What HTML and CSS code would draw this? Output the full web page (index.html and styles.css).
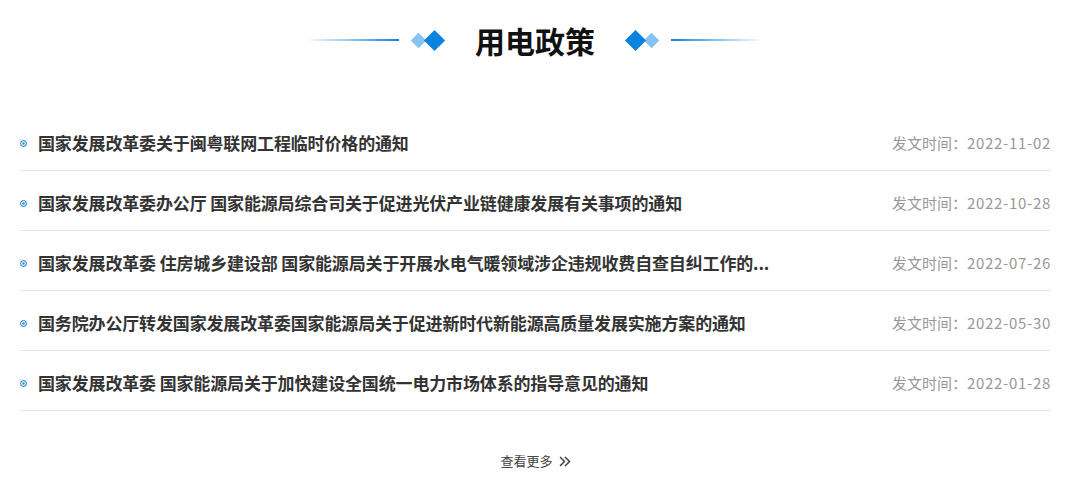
FILE: index.html
```html
<!DOCTYPE html>
<html lang="zh-CN">
<head>
<meta charset="utf-8">
<title>用电政策</title>
<link rel="stylesheet" href="styles.css">
</head>
<body>
<div class="page">
  <header class="head">
    <span class="line line-l"></span>
    <span class="dia-group dia-group-l">
      <span class="dia dia-light"></span>
      <span class="dia dia-dark"></span>
    </span>
    <h1 class="title">用电政策</h1>
    <span class="dia-group dia-group-r">
      <span class="dia dia-dark"></span>
      <span class="dia dia-light"></span>
    </span>
    <span class="line line-r"></span>
  </header>
  <ul class="list">
    <li class="item"><span class="bullet"></span><span class="name">国家发展改革委关于闽粤联网工程临时价格的通知</span><span class="date">发文时间：<span class="num">2022-11-02</span></span></li>
    <li class="item"><span class="bullet"></span><span class="name">国家发展改革委办公厅 国家能源局综合司关于促进光伏产业链健康发展有关事项的通知</span><span class="date">发文时间：<span class="num">2022-10-28</span></span></li>
    <li class="item"><span class="bullet"></span><span class="name">国家发展改革委 住房城乡建设部 国家能源局关于开展水电气暖领域涉企违规收费自查自纠工作的...</span><span class="date">发文时间：<span class="num">2022-07-26</span></span></li>
    <li class="item"><span class="bullet"></span><span class="name">国务院办公厅转发国家发展改革委国家能源局关于促进新时代新能源高质量发展实施方案的通知</span><span class="date">发文时间：<span class="num">2022-05-30</span></span></li>
    <li class="item"><span class="bullet"></span><span class="name">国家发展改革委 国家能源局关于加快建设全国统一电力市场体系的指导意见的通知</span><span class="date">发文时间：<span class="num">2022-01-28</span></span></li>
  </ul>
  <div class="more"><a class="more-link" href="#"><span>查看更多</span><svg class="chev" width="12" height="11" viewBox="0 0 12 11"><path d="M1 1 L5.5 5.5 L1 10 M6 1 L10.5 5.5 L6 10" fill="none" stroke="#444" stroke-width="1.5"/></svg></a></div>
</div>
</body>
</html>
```
FILE: styles.css
```css
html, body {
  margin: 0;
  padding: 0;
  background: #fff;
}
body {
  font-family: "Microsoft YaHei", "Noto Sans CJK SC", "Noto Sans", sans-serif;
  color: #333;
}
.page {
  width: 1031px;
  margin-left: 20px;
}
.head {
  height: 80px;
  display: flex;
  align-items: center;
  justify-content: center;
  padding-right: 1px;
}
.line {
  display: block;
  width: 93px;
  height: 2px;
}
.line-l {
  background: linear-gradient(to right, rgba(21,131,224,0), #1583e0);
  margin-right: 14px;
}
.line-r {
  background: linear-gradient(to left, rgba(21,131,224,0), #1583e0);
  margin-left: 14px;
}
.dia-group {
  display: flex;
  align-items: center;
  gap: 3px;
}
.dia {
  display: block;
  transform: rotate(45deg);
}
.dia-light {
  width: 11px;
  height: 11px;
  background: #86c2f2;
}
.dia-dark {
  width: 15px;
  height: 15px;
  background: #0a82e0;
  position: relative;
  z-index: 1;
}
.title {
  margin: 0 33px;
  font-size: 30px;
  font-weight: 700;
  color: #111;
  line-height: 40px;
}
.list {
  list-style: none;
  margin: 31px 0 0;
  padding: 0;
}
.item {
  display: flex;
  align-items: center;
  padding: 22px 0 17px;
  border-bottom: 1px solid #e6e6e6;
  line-height: 20px;
}
.bullet {
  width: 5px;
  height: 5px;
  border-radius: 50%;
  border: 1.5px solid #2a8de0;
  background: #2a8de0;
  box-shadow: inset 0 0 0 1.2px #fff;
  margin-right: 11px;
  flex: none;
}
.name {
  flex: 1;
  min-width: 0;
  font-size: 17px;
  font-weight: 700;
  letter-spacing: -0.15px;
  color: #333;
  white-space: nowrap;
}
.date {
  flex: none;
  white-space: nowrap;
  font-size: 15px;
  color: #999;
}
.num {
  letter-spacing: 0.7px;
}
.more {
  margin-top: 38px;
  text-align: center;
  line-height: 20px;
}
.more-link {
  display: inline-flex;
  align-items: center;
  gap: 6px;
  font-size: 13px;
  color: #444;
  text-decoration: none;
}
.chev {
  display: block;
}
```
